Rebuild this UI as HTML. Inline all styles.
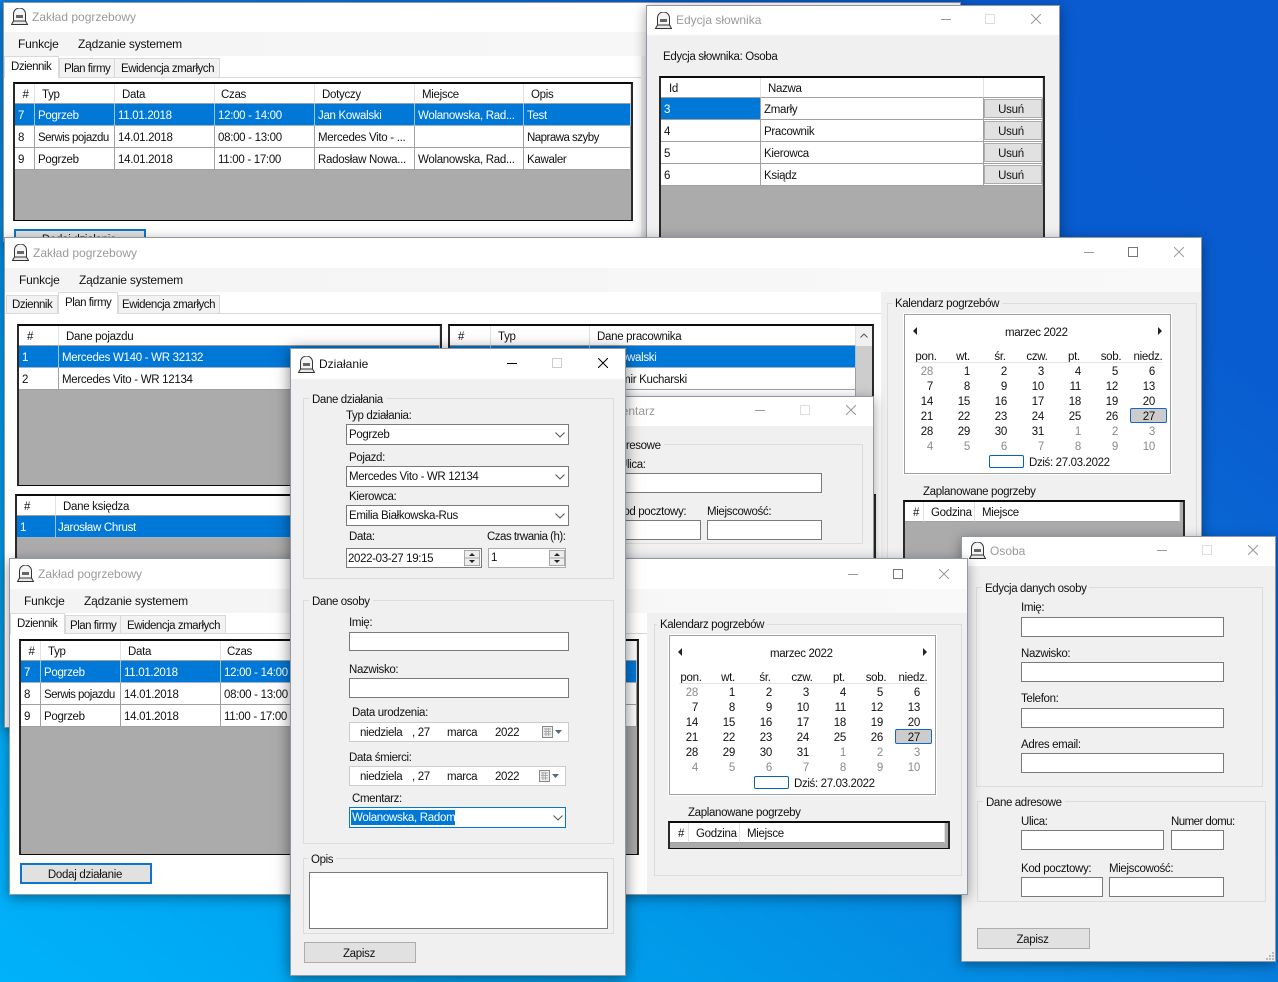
<!DOCTYPE html>
<html lang="pl">
<head>
<meta charset="utf-8">
<title>Zakład pogrzebowy</title>
<style>
*{box-sizing:border-box}
html,body{margin:0;padding:0}
body{position:relative;width:1278px;height:982px;overflow:hidden;font:11.5px/14px "Liberation Sans",sans-serif;letter-spacing:-.3px;color:#111;background:linear-gradient(to top right,#00b2fa 0%,#009ae9 28%,#0a74d9 58%,#095ccf 80%,#0a5ad0 100%)}
section{position:absolute;left:0;top:0}
.t{position:absolute;white-space:nowrap;line-height:14px;margin-top:1px;letter-spacing:-.35px}
.a{position:absolute}
.win{position:absolute;background:#f0f0f0;border:1px solid #8f98a3;box-shadow:0 3px 12px rgba(0,0,0,.38)}
.ttl{position:absolute;background:#fff}
.mb{position:absolute;background:linear-gradient(90deg,#f4f4f4,#f9f9f9)}
.wh{position:absolute;background:#fff}
.t.tt{font-size:12px;letter-spacing:0;color:#9a9a9a;margin-top:0}
.t.mn{font-size:12px;letter-spacing:-.2px;margin-top:0}
.t.tb{letter-spacing:-.48px}
.tab{position:absolute;background:#f2f2f2;border:1px solid #d9d9d9;border-bottom:0}
.tab.on{background:#fff}
.line{position:absolute;height:1px;background:#d9d9d9}
.g{position:absolute;background:#ababab;border:2px solid #0c0c0c;border-left-color:#2a2a2a;border-right-color:#2a2a2a;border-bottom-width:1px;overflow:hidden}
table{border-collapse:separate;border-spacing:0;table-layout:fixed}
td,th{height:22px;padding:2px 0 0 3px;background:#fff;border-right:1px solid #a0a0a0;border-bottom:1px solid #a0a0a0;font-weight:400;text-align:left;white-space:nowrap;overflow:hidden}
th{height:20px;padding-left:7px;border-right-color:#e2e2e2}
th.c{padding-left:2px;text-align:center}
td.n{letter-spacing:-.52px}
tr.s td{background:#0078d7;color:#fff;border-right-color:#9cc4e8;border-bottom-color:#9fb4c8}
.btn{position:absolute;display:flex;align-items:center;justify-content:center;background:#e1e1e1;border:1px solid #adadad;padding:2px 2px 0 0}
.btn.u{padding-right:4px}
.in{position:absolute;background:#fff;border:1px solid #7a7a7a}
.gb{position:absolute;border:1px solid #dcdcdc}
.lb{position:absolute;background:#f0f0f0;padding:0 3px;white-space:nowrap;line-height:14px;margin-top:1px;letter-spacing:-.38px}
.cal{position:absolute;background:#fff;border:1px solid #a0a0a0;outline:1px solid #fff}
.days,.hd{position:absolute;display:grid;grid-template-columns:repeat(7,37px);grid-auto-rows:15px;line-height:15px}
.days{text-align:right}
.hd{text-align:center}
.days i,.hd i{font-style:normal}
.days i.o{color:#8a8a8a}
.sel{position:absolute;background:#ccc;border:1px solid #1a66b8;border-radius:2px}
.tod{position:absolute;background:#fff;border:1px solid #0a64ad;border-radius:2px}
.tl,.tr{position:absolute;width:0;height:0;border-top:4px solid transparent;border-bottom:4px solid transparent}
.tl{border-right:4px solid #222}
.tr{border-left:4px solid #222}
svg{position:absolute;overflow:visible}
</style>
</head>
<body>
<svg width="0" height="0" style="display:none">
<symbol id="ic" viewBox="0 0 17 17"><path d="M.5 16.500l2-3.500h12l2 3.500z" fill="#e8e8e8" stroke="#333"/><path d="M2.500 13V6a6 6 0 0 1 12 0v7z" fill="#f4f4f4" stroke="#333"/><path d="M5 7h7v3H5z" fill="#666"/></symbol>
<symbol id="min" viewBox="0 0 10 10"><path d="M0 5.500h10" stroke="currentColor" fill="none"/></symbol>
<symbol id="max" viewBox="0 0 10 10"><path d="M.5.5h9v9h-9z" stroke="currentColor" fill="none"/></symbol>
<symbol id="cls" viewBox="0 0 10 10"><path d="M0 0L10 10M10 0L0 10" stroke="currentColor" fill="none"/></symbol>
<symbol id="chev" viewBox="0 0 10 6"><path d="M.5.5L5 5l4.500-4.500" stroke="#555" fill="none"/></symbol>
<symbol id="spin" viewBox="0 0 16 16"><path d="M.5.500h15v15h-15z" fill="#ededed" stroke="#a8a8a8"/><path d="M.5 8h15" stroke="#a8a8a8"/><path d="M5 6l3-3 3 3zM5 10h6l-3 3z" fill="#222"/></symbol>
<symbol id="dcal" viewBox="0 0 20 12"><path d="M.5.500h10v11h-10z" fill="#eee" stroke="#888"/><path d="M2 3h7M2 5.500h7M2 8h7M4 2v8M6.500 2v8" stroke="#aaa" fill="none"/><path d="M13 4h7l-3.500 4z" fill="#566a85"/></symbol>
</svg>

<!-- Window 1 -->
<section>
<div class="win" style="left:3px;top:2px;width:958px;height:240px"></div>
<div class="ttl" style="left:4px;top:3px;width:956px;height:29px"></div>
<svg style="left:11px;top:8px" width="17" height="17"><use href="#ic"/></svg>
<span class="t tt" style="left:32px;top:10px">Zakład pogrzebowy</span>
<div class="mb" style="left:4px;top:32px;width:956px;height:24px"></div>
<div class="wh" style="left:4px;top:56px;width:637px;height:186px"></div>
<span class="t mn" style="left:18px;top:37px">Funkcje</span>
<span class="t mn" style="left:78px;top:37px">Ządzanie systemem</span>
<div class="line" style="left:4px;top:77px;width:637px"></div>
<div class="tab on" style="left:4px;top:56px;width:55px;height:22px"></div>
<div class="tab" style="left:59px;top:58px;width:56px;height:19px"></div>
<div class="tab" style="left:114px;top:58px;width:106px;height:19px"></div>
<span class="t tb" style="left:11px;top:59px">Dziennik</span>
<span class="t tb" style="left:64px;top:61px">Plan firmy</span>
<span class="t tb" style="left:121px;top:61px">Ewidencja zmarłych</span>
<div class="g" style="left:13px;top:82px;width:620px;height:139px">
<table style="width:616px"><col style="width:20px"><col style="width:80px"><col style="width:100px"><col style="width:100px"><col style="width:100px"><col style="width:109px"><col style="width:107px">
<tr><th class="c">#</th><th>Typ</th><th>Data</th><th style="padding-left:6px">Czas</th><th>Dotyczy</th><th>Miejsce</th><th>Opis</th></tr>
<tr class="s"><td>7</td><td>Pogrzeb</td><td>11.01.2018</td><td>12:00 - 14:00</td><td>Jan Kowalski</td><td>Wolanowska, Rad...</td><td>Test</td></tr>
<tr><td>8</td><td class="n">Serwis pojazdu</td><td>14.01.2018</td><td>08:00 - 13:00</td><td>Mercedes Vito - ...</td><td></td><td class="n">Naprawa szyby</td></tr>
<tr><td>9</td><td>Pogrzeb</td><td>14.01.2018</td><td>11:00 - 17:00</td><td>Radosław Nowa...</td><td>Wolanowska, Rad...</td><td>Kawaler</td></tr>
</table></div>
<div class="btn" style="left:14px;top:229px;width:132px;height:20px;border:2px solid #0f75c9">Dodaj działanie</div>
</section>

<!-- Edycja słownika -->
<section>
<div class="win" style="left:646px;top:5px;width:414px;height:240px"></div>
<div class="ttl" style="left:647px;top:6px;width:412px;height:29px"></div>
<svg style="left:655px;top:12px" width="17" height="17"><use href="#ic"/></svg>
<span class="t tt" style="left:676px;top:13px">Edycja słownika</span>
<svg style="left:941px;top:14px;color:#999" width="10" height="10"><use href="#min"/></svg>
<svg style="left:985px;top:14px;color:#ddd" width="10" height="10"><use href="#max"/></svg>
<svg style="left:1031px;top:14px;color:#999" width="10" height="10"><use href="#cls"/></svg>
<span class="t" style="left:663px;top:49px">Edycja słownika: Osoba</span>
<div class="g" style="left:659px;top:76px;width:386px;height:170px">
<table style="width:382px"><col style="width:100px"><col style="width:223px"><col style="width:59px">
<tr><th style="padding-left:8px">Id</th><th>Nazwa</th><th></th></tr>
<tr><td style="background:#0078d7;color:#fff">3</td><td>Zmarły</td><td></td></tr>
<tr><td>4</td><td>Pracownik</td><td></td></tr>
<tr><td>5</td><td>Kierowca</td><td></td></tr>
<tr><td>6</td><td>Ksiądz</td><td></td></tr>
</table></div>
<div class="btn u" style="left:984px;top:99px;width:58px;height:19px">Usuń</div>
<div class="btn u" style="left:984px;top:121px;width:58px;height:19px">Usuń</div>
<div class="btn u" style="left:984px;top:143px;width:58px;height:19px">Usuń</div>
<div class="btn u" style="left:984px;top:165px;width:58px;height:19px">Usuń</div>
</section>

<!-- Window 2: Plan firmy -->
<section>
<div class="win" style="left:4px;top:237px;width:1198px;height:491px"></div>
<div class="ttl" style="left:5px;top:238px;width:1196px;height:30px"></div>
<svg style="left:12px;top:244px" width="17" height="17"><use href="#ic"/></svg>
<span class="t tt" style="left:33px;top:246px">Zakład pogrzebowy</span>
<svg style="left:1084px;top:247px;color:#999" width="10" height="10"><use href="#min"/></svg>
<svg style="left:1128px;top:247px;color:#777" width="10" height="10"><use href="#max"/></svg>
<svg style="left:1174px;top:247px;color:#999" width="10" height="10"><use href="#cls"/></svg>
<div class="mb" style="left:5px;top:268px;width:1196px;height:24px"></div>
<div class="wh" style="left:5px;top:292px;width:876px;height:435px"></div>
<span class="t mn" style="left:19px;top:273px">Funkcje</span>
<span class="t mn" style="left:79px;top:273px">Ządzanie systemem</span>
<div class="line" style="left:5px;top:313px;width:876px"></div>
<div class="tab" style="left:6px;top:295px;width:52px;height:18px"></div>
<div class="tab on" style="left:58px;top:292px;width:60px;height:22px"></div>
<div class="tab" style="left:118px;top:295px;width:102px;height:18px"></div>
<span class="t tb" style="left:12px;top:297px">Dziennik</span>
<span class="t tb" style="left:65px;top:295px">Plan firmy</span>
<span class="t tb" style="left:122px;top:297px">Ewidencja zmarłych</span>

<div class="g" style="left:17px;top:324px;width:425px;height:162px">
<table style="width:421px"><col style="width:40px"><col style="width:381px">
<tr><th style="padding-left:8px">#</th><th>Dane pojazdu</th></tr>
<tr class="s"><td>1</td><td>Mercedes W140 - WR 32132</td></tr>
<tr><td>2</td><td>Mercedes Vito - WR 12134</td></tr>
</table></div>

<div class="g" style="left:448px;top:324px;width:426px;height:162px">
<table style="width:406px"><col style="width:41px"><col style="width:99px"><col style="width:266px">
<tr><th style="padding-left:8px">#</th><th>Typ</th><th>Dane pracownika</th></tr>
<tr class="s"><td></td><td></td><td>Jan Kowalski</td></tr>
<tr><td></td><td></td><td style="padding-left:10px">Kazimir Kucharski</td></tr>
<tr><td></td><td></td><td></td></tr>
</table>
<div class="a" style="left:406px;top:0;width:16px;height:160px;background:#cdcdcd"></div>
<div class="a" style="left:406px;top:0;width:16px;height:20px;background:#f0f0f0"></div>
<svg style="left:410px;top:7px" width="8" height="5"><path d="M.5 4.500L4 1l3.500 3.500" stroke="#555" fill="none"/></svg>
</div>

<div class="g" style="left:15px;top:494px;width:861px;height:120px">
<table style="width:857px"><col style="width:39px"><col style="width:818px">
<tr><th>#</th><th>Dane księdza</th></tr>
<tr class="s"><td>1</td><td style="padding-left:2px">Jarosław Chrust</td></tr>
</table></div>

<div class="gb" style="left:887px;top:303px;width:310px;height:420px"></div>
<span class="lb" style="left:892px;top:296px">Kalendarz pogrzebów</span>
<div class="cal" style="left:904px;top:314px;width:267px;height:160px"></div>
<span class="t" style="left:1005px;top:325px">marzec 2022</span>
<div class="tl" style="left:913px;top:327px"></div>
<div class="tr" style="left:1158px;top:327px"></div>
<div class="hd" style="left:907.500px;top:350px"><i>pon.</i><i>wt.</i><i>śr.</i><i>czw.</i><i>pt.</i><i>sob.</i><i>niedz.</i></div>
<div class="a" style="left:914px;top:362px;width:249px;height:1px;background:#e4e4e4"></div>
<div class="sel" style="left:1130px;top:408px;width:37px;height:15px"></div>
<div class="days" style="left:896px;top:365px"><i class="o">28</i><i>1</i><i>2</i><i>3</i><i>4</i><i>5</i><i>6</i><i>7</i><i>8</i><i>9</i><i>10</i><i>11</i><i>12</i><i>13</i><i>14</i><i>15</i><i>16</i><i>17</i><i>18</i><i>19</i><i>20</i><i>21</i><i>22</i><i>23</i><i>24</i><i>25</i><i>26</i><i>27</i><i>28</i><i>29</i><i>30</i><i>31</i><i class="o">1</i><i class="o">2</i><i class="o">3</i><i class="o">4</i><i class="o">5</i><i class="o">6</i><i class="o">7</i><i class="o">8</i><i class="o">9</i><i class="o">10</i></div>
<div class="tod" style="left:989px;top:455px;width:35px;height:13px"></div>
<span class="t" style="left:1029px;top:455px">Dziś: 27.03.2022</span>
<span class="t" style="left:923px;top:484px">Zaplanowane pogrzeby</span>
<div class="g" style="left:903px;top:500px;width:282px;height:120px">
<table style="width:275px"><col style="width:19px"><col style="width:51px"><col style="width:205px">
<tr><th class="c" style="padding-left:4px">#</th><th>Godzina</th><th>Miejsce</th></tr>
</table></div>
</section>

<!-- Cmentarz -->
<section>
<div class="win" style="left:560px;top:396px;width:314px;height:170px"></div>
<div class="ttl" style="left:561px;top:397px;width:312px;height:29px"></div>
<span class="t tt" style="left:603px;top:404px">Cmentarz</span>
<svg style="left:755px;top:405px;color:#999" width="10" height="10"><use href="#min"/></svg>
<svg style="left:800px;top:405px;color:#ddd" width="10" height="10"><use href="#max"/></svg>
<svg style="left:846px;top:405px;color:#999" width="10" height="10"><use href="#cls"/></svg>
<div class="gb" style="left:580px;top:444px;width:283px;height:100px"></div>
<span class="lb" style="left:582px;top:438px">Dane adresowe</span>
<span class="t" style="left:619px;top:457px">Ulica:</span>
<div class="in" style="left:600px;top:473px;width:222px;height:20px"></div>
<span class="t" style="left:616px;top:504px">Kod pocztowy:</span>
<div class="in" style="left:600px;top:520px;width:101px;height:20px"></div>
<span class="t" style="left:707px;top:504px">Miejscowość:</span>
<div class="in" style="left:707px;top:520px;width:115px;height:20px"></div>
</section>

<!-- Osoba -->
<section>
<div class="win" style="left:961px;top:536px;width:315px;height:426px"></div>
<div class="ttl" style="left:962px;top:537px;width:313px;height:29px"></div>
<svg style="left:969px;top:542px" width="17" height="17"><use href="#ic"/></svg>
<span class="t tt" style="left:990px;top:544px">Osoba</span>
<svg style="left:1157px;top:545px;color:#999" width="10" height="10"><use href="#min"/></svg>
<svg style="left:1202px;top:545px;color:#ddd" width="10" height="10"><use href="#max"/></svg>
<svg style="left:1248px;top:545px;color:#999" width="10" height="10"><use href="#cls"/></svg>
<div class="gb" style="left:976px;top:587px;width:287px;height:200px"></div>
<span class="lb" style="left:982px;top:581px">Edycja danych osoby</span>
<span class="t" style="left:1021px;top:600px">Imię:</span>
<div class="in" style="left:1021px;top:617px;width:203px;height:20px"></div>
<span class="t" style="left:1021px;top:646px">Nazwisko:</span>
<div class="in" style="left:1021px;top:662px;width:203px;height:20px"></div>
<span class="t" style="left:1021px;top:691px">Telefon:</span>
<div class="in" style="left:1021px;top:708px;width:203px;height:20px"></div>
<span class="t" style="left:1021px;top:737px">Adres email:</span>
<div class="in" style="left:1021px;top:753px;width:203px;height:20px"></div>
<div class="gb" style="left:977px;top:801px;width:289px;height:101px"></div>
<span class="lb" style="left:983px;top:795px">Dane adresowe</span>
<span class="t" style="left:1021px;top:814px">Ulica:</span>
<div class="in" style="left:1021px;top:830px;width:143px;height:20px"></div>
<span class="t" style="left:1171px;top:814px;letter-spacing:-.55px">Numer domu:</span>
<div class="in" style="left:1171px;top:830px;width:53px;height:20px"></div>
<span class="t" style="left:1021px;top:861px">Kod pocztowy:</span>
<div class="in" style="left:1021px;top:877px;width:82px;height:20px"></div>
<span class="t" style="left:1109px;top:861px">Miejscowość:</span>
<div class="in" style="left:1109px;top:877px;width:115px;height:20px"></div>
<div class="btn" style="left:977px;top:928px;width:113px;height:21px">Zapisz</div>
<svg style="left:1266px;top:952px" width="9" height="9"><path d="M6 0h2v2H6zM3 3h2v2H3zM6 3h2v2H6zM0 6h2v2H0zM3 6h2v2H3zM6 6h2v2H6z" fill="#bbb"/></svg>
</section>

<!-- Window 3: Dziennik -->
<section>
<div class="win" style="left:9px;top:558px;width:959px;height:337px"></div>
<div class="ttl" style="left:10px;top:559px;width:957px;height:30px"></div>
<svg style="left:17px;top:565px" width="17" height="17"><use href="#ic"/></svg>
<span class="t tt" style="left:38px;top:567px">Zakład pogrzebowy</span>
<svg style="left:848px;top:569px;color:#999" width="10" height="10"><use href="#min"/></svg>
<svg style="left:893px;top:569px;color:#777" width="10" height="10"><use href="#max"/></svg>
<svg style="left:939px;top:569px;color:#999" width="10" height="10"><use href="#cls"/></svg>
<div class="mb" style="left:10px;top:589px;width:957px;height:24px"></div>
<div class="wh" style="left:10px;top:613px;width:637px;height:281px"></div>
<span class="t mn" style="left:24px;top:594px">Funkcje</span>
<span class="t mn" style="left:84px;top:594px">Ządzanie systemem</span>
<div class="line" style="left:10px;top:633px;width:637px"></div>
<div class="tab on" style="left:10px;top:613px;width:55px;height:21px"></div>
<div class="tab" style="left:65px;top:615px;width:56px;height:18px"></div>
<div class="tab" style="left:120px;top:615px;width:106px;height:18px"></div>
<span class="t tb" style="left:17px;top:616px">Dziennik</span>
<span class="t tb" style="left:70px;top:618px">Plan firmy</span>
<span class="t tb" style="left:127px;top:618px">Ewidencja zmarłych</span>
<div class="g" style="left:19px;top:639px;width:620px;height:216px">
<table style="width:616px"><col style="width:20px"><col style="width:80px"><col style="width:100px"><col style="width:100px"><col style="width:100px"><col style="width:109px"><col style="width:107px">
<tr><th class="c">#</th><th>Typ</th><th>Data</th><th style="padding-left:6px">Czas</th><th>Dotyczy</th><th>Miejsce</th><th>Opis</th></tr>
<tr class="s"><td>7</td><td>Pogrzeb</td><td>11.01.2018</td><td>12:00 - 14:00</td><td></td><td></td><td></td></tr>
<tr><td>8</td><td class="n">Serwis pojazdu</td><td>14.01.2018</td><td>08:00 - 13:00</td><td></td><td></td><td></td></tr>
<tr><td>9</td><td>Pogrzeb</td><td>14.01.2018</td><td>11:00 - 17:00</td><td></td><td></td><td></td></tr>
</table></div>
<div class="btn" style="left:20px;top:863px;width:132px;height:21px;border:2px solid #0f75c9">Dodaj działanie</div>

<div class="gb" style="left:654px;top:624px;width:308px;height:252px"></div>
<span class="lb" style="left:657px;top:617px">Kalendarz pogrzebów</span>
<div class="cal" style="left:669px;top:635px;width:267px;height:160px"></div>
<span class="t" style="left:770px;top:646px">marzec 2022</span>
<div class="tl" style="left:678px;top:648px"></div>
<div class="tr" style="left:923px;top:648px"></div>
<div class="hd" style="left:672.500px;top:671px"><i>pon.</i><i>wt.</i><i>śr.</i><i>czw.</i><i>pt.</i><i>sob.</i><i>niedz.</i></div>
<div class="a" style="left:679px;top:683px;width:249px;height:1px;background:#e4e4e4"></div>
<div class="sel" style="left:895px;top:729px;width:37px;height:15px"></div>
<div class="days" style="left:661px;top:686px"><i class="o">28</i><i>1</i><i>2</i><i>3</i><i>4</i><i>5</i><i>6</i><i>7</i><i>8</i><i>9</i><i>10</i><i>11</i><i>12</i><i>13</i><i>14</i><i>15</i><i>16</i><i>17</i><i>18</i><i>19</i><i>20</i><i>21</i><i>22</i><i>23</i><i>24</i><i>25</i><i>26</i><i>27</i><i>28</i><i>29</i><i>30</i><i>31</i><i class="o">1</i><i class="o">2</i><i class="o">3</i><i class="o">4</i><i class="o">5</i><i class="o">6</i><i class="o">7</i><i class="o">8</i><i class="o">9</i><i class="o">10</i></div>
<div class="tod" style="left:754px;top:776px;width:35px;height:13px"></div>
<span class="t" style="left:794px;top:776px">Dziś: 27.03.2022</span>
<span class="t" style="left:688px;top:805px">Zaplanowane pogrzeby</span>
<div class="g" style="left:668px;top:821px;width:282px;height:28px">
<table style="width:275px"><col style="width:19px"><col style="width:51px"><col style="width:205px">
<tr><th class="c" style="padding-left:4px">#</th><th>Godzina</th><th>Miejsce</th></tr>
</table></div>
</section>

<!-- Działanie dialog -->
<section>
<div class="win" style="left:290px;top:348px;width:336px;height:628px;box-shadow:0 2px 14px rgba(0,0,0,.5)"></div>
<div class="ttl" style="left:291px;top:349px;width:334px;height:30px"></div>
<svg style="left:298px;top:356px" width="17" height="17"><use href="#ic"/></svg>
<span class="t" style="left:319px;top:357px;font-size:12px;letter-spacing:0;margin-top:0">Działanie</span>
<svg style="left:507px;top:358px;color:#000" width="10" height="10"><use href="#min"/></svg>
<svg style="left:552px;top:358px;color:#ccc" width="10" height="10"><use href="#max"/></svg>
<svg style="left:598px;top:358px;color:#000" width="10" height="10"><use href="#cls"/></svg>

<div class="gb" style="left:303px;top:398px;width:311px;height:181px"></div>
<span class="lb" style="left:309px;top:392px">Dane działania</span>
<span class="t" style="left:346px;top:408px">Typ działania:</span>
<div class="in" style="left:346px;top:424px;width:223px;height:21px"></div>
<span class="t" style="left:349px;top:427px">Pogrzeb</span>
<svg style="left:555px;top:432px" width="10" height="6"><use href="#chev"/></svg>
<span class="t" style="left:349px;top:450px">Pojazd:</span>
<div class="in" style="left:346px;top:466px;width:223px;height:21px"></div>
<span class="t" style="left:349px;top:469px">Mercedes Vito - WR 12134</span>
<svg style="left:555px;top:474px" width="10" height="6"><use href="#chev"/></svg>
<span class="t" style="left:349px;top:489px">Kierowca:</span>
<div class="in" style="left:346px;top:505px;width:223px;height:21px"></div>
<span class="t" style="left:349px;top:508px">Emilia Białkowska-Rus</span>
<svg style="left:555px;top:513px" width="10" height="6"><use href="#chev"/></svg>
<span class="t" style="left:349px;top:529px">Data:</span>
<span class="t" style="left:487px;top:529px;letter-spacing:-.5px">Czas trwania (h):</span>
<div class="in" style="left:346px;top:548px;width:136px;height:20px"></div>
<span class="t" style="left:348px;top:551px">2022-03-27 19:15</span>
<svg style="left:464px;top:550px" width="16" height="16"><use href="#spin"/></svg>
<div class="in" style="left:488px;top:548px;width:78px;height:20px;border-color:#aaa"></div>
<span class="t" style="left:491px;top:550px">1</span>
<svg style="left:549px;top:550px" width="16" height="16"><use href="#spin"/></svg>

<div class="gb" style="left:303px;top:600px;width:311px;height:244px"></div>
<span class="lb" style="left:309px;top:594px">Dane osoby</span>
<span class="t" style="left:349px;top:615px">Imię:</span>
<div class="in" style="left:349px;top:632px;width:220px;height:19px"></div>
<span class="t" style="left:349px;top:662px">Nazwisko:</span>
<div class="in" style="left:349px;top:678px;width:220px;height:20px"></div>
<span class="t" style="left:352px;top:705px">Data urodzenia:</span>
<div class="in" style="left:349px;top:722px;width:220px;height:20px;border-color:#ccc"></div>
<span class="t" style="left:360px;top:725px">niedziela</span>
<span class="t" style="left:412px;top:725px">, 27</span>
<span class="t" style="left:447px;top:725px">marca</span>
<span class="t" style="left:495px;top:725px">2022</span>
<svg style="left:542px;top:726px" width="20" height="12"><use href="#dcal"/></svg>
<span class="t" style="left:349px;top:750px">Data śmierci:</span>
<div class="in" style="left:349px;top:766px;width:217px;height:20px;border-color:#ccc"></div>
<span class="t" style="left:360px;top:769px">niedziela</span>
<span class="t" style="left:412px;top:769px">, 27</span>
<span class="t" style="left:447px;top:769px">marca</span>
<span class="t" style="left:495px;top:769px">2022</span>
<svg style="left:539px;top:770px" width="20" height="12"><use href="#dcal"/></svg>
<span class="t" style="left:352px;top:791px">Cmentarz:</span>
<div class="in" style="left:349px;top:807px;width:217px;height:21px;border-color:#0078d7"></div>
<div class="a" style="left:351px;top:810px;width:104px;height:15px;background:#0078d7"></div>
<span class="t" style="left:352px;top:810px;color:#fff;letter-spacing:-.3px">Wolanowska, Radom</span>
<svg style="left:553px;top:815px" width="10" height="6"><use href="#chev"/></svg>

<div class="gb" style="left:303px;top:858px;width:311px;height:76px"></div>
<span class="lb" style="left:308px;top:852px">Opis</span>
<div class="in" style="left:309px;top:872px;width:299px;height:57px"></div>
<div class="btn" style="left:304px;top:942px;width:112px;height:21px">Zapisz</div>
</section>
</body>
</html>
